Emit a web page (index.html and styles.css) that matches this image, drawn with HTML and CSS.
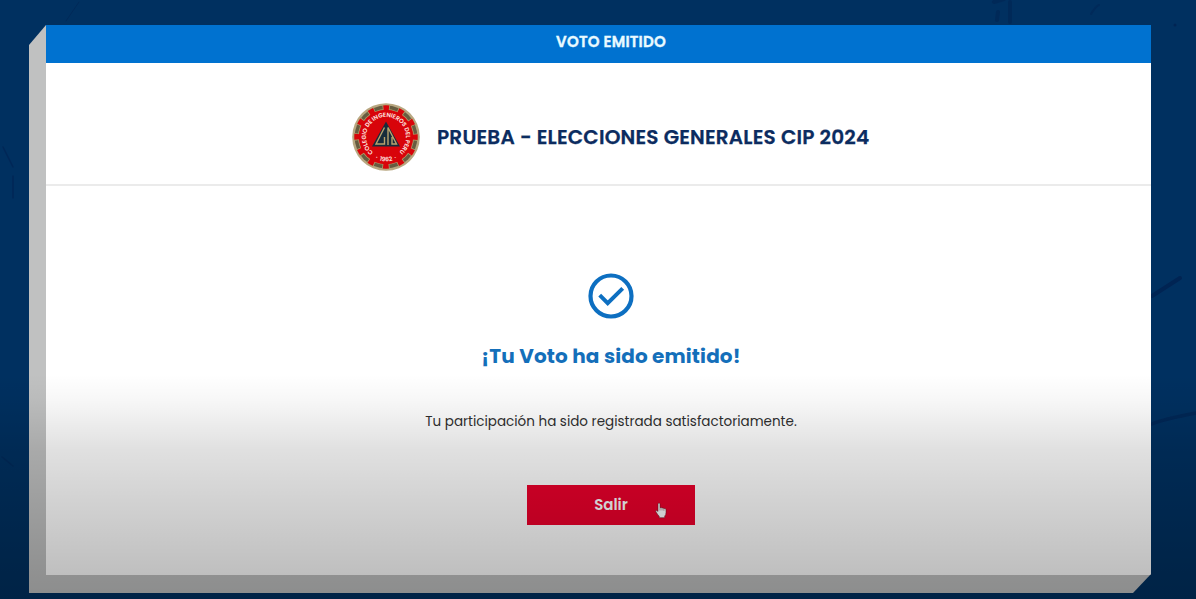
FILE: index.html
```html
<!DOCTYPE html>
<html lang="es">
<head>
<meta charset="utf-8">
<title>Voto emitido</title>
<link rel="stylesheet" href="styles.css">
</head>
<body>
<svg class="backdrop" viewBox="0 0 1196 599" aria-hidden="true">
  <g fill="none" stroke="#002453" stroke-linecap="round">
    <path d="M3 147l10 20M13 176v22" stroke-width="1.5" opacity=".7"/>
    <path d="M79 2L66 21" stroke-width="1" opacity=".6"/>
    <path d="M994 2l10-3M998 12l-1 8M1010 2v20" stroke-width="4" opacity=".6"/>
    <path d="M1091 14q5-8 8-9" stroke-width="2" opacity=".5"/>
    <path d="M1152 296L1180 278" stroke-width="4"/>
    <path d="M1152 424q12-5 44-11" stroke-width="3.5" opacity=".75"/>
    <path d="M2 457l11 9" stroke-width="1.5" opacity=".5"/>
  </g>
  <circle cx="1175" cy="25" r="1.5" fill="#002453"/>
</svg>
<main class="slab">
  <section class="card">
    <header class="banner"><span class="banner-text">VOTO EMITIDO</span></header>
    <div class="brand">
      <svg class="seal" viewBox="0 0 68 68" aria-label="Colegio de Ingenieros del Perú">
        <circle cx="34" cy="34" r="33.8" fill="#b8a781"/>
        <circle cx="34" cy="34" r="31.4" fill="#665c40"/>
        <circle cx="34" cy="34" r="28" fill="#b39b68"/>
        <circle cx="34" cy="34" r="29.3" fill="none" stroke="#b39b68" stroke-width="5.4" stroke-dasharray="7.2 8.142" stroke-dashoffset="3.6"/>
        <circle cx="34" cy="34" r="27.2" fill="#d8040a"/>
        <circle cx="34" cy="34" r="29" fill="none" stroke="#d8040a" stroke-width="5.4" stroke-dasharray="5.6 9.584" stroke-dashoffset="2.8"/>
        <path id="ring" d="M21.3 49.3A20 20 0 1 1 46.7 49.3" fill="none"/>
        <path id="ring-low" d="M14 48A24.6 24.6 0 0 0 54 48" fill="none"/>
        <text class="seal-text"><textPath href="#ring" textLength="97">COLEGIO DE INGENIEROS DEL PERU</textPath></text>
        <text class="seal-text"><textPath href="#ring-low" startOffset="50%" text-anchor="middle">· &#160;1962&#160; ·</textPath></text>
        <path d="M34 18.5L48 43.5H20Z" fill="#172c3b"/>
        <path d="M32.5 24.5L24 41H32.5V34M36 42V24.5L44.5 41H40V34" fill="none" stroke="#b9a36e" stroke-width="1.4"/>
      </svg>
      <h1 class="title">PRUEBA - ELECCIONES GENERALES CIP 2024</h1>
    </div>
    <div class="result">
      <svg class="check" viewBox="0 0 46 46" fill="none" stroke="#0d6fc1" aria-hidden="true">
        <circle cx="23" cy="23" r="20.5" stroke-width="4.2"/>
        <path d="M11.7 22.2L19.7 30.2L34.7 15.4" stroke-width="4"/>
      </svg>
      <h2 class="headline">¡Tu Voto ha sido emitido!</h2>
      <p class="message">Tu participación ha sido registrada satisfactoriamente.</p>
      <button class="exit" type="button"><span class="exit-text">Salir</span>
        <svg class="pointer" viewBox="0 0 12 16" aria-hidden="true">
          <path d="M3 1.7Q3.1.5 4.1.6Q5 .7 5 1.7V5.4Q6.1 4.6 7 5.6Q8.1 5 8.8 6Q10.6 5.5 11 7.2V10Q11 12.5 9.7 13.6V15.2H4.2V13.7Q3 12.7 1 9.5Q.3 8.3 1.3 8Q2 7.8 3 9Z" fill="#fff" stroke="#591420" stroke-width=".5"/>
          <path d="M5 5.6V8M7 5.8V8M8.9 6.2V8.3" stroke="#704049" stroke-width=".5"/>
        </svg>
      </button>
    </div>
  </section>
</main>
<div class="shade"></div>
</body>
</html>
```
FILE: styles.css
```css
* { box-sizing: border-box; }
body {
  margin: 0;
  width: 1196px;
  height: 599px;
  padding: 25px 45px 0 29px;
  overflow: hidden;
  background: #003060;
  font-family: Poppins, Inter, "Open Sans", sans-serif;
}
.backdrop { position: absolute; inset: 0; width: 1196px; height: 599px; }
.slab {
  position: relative;
  height: 568px;
  padding: 0 0 18.5px 17px;
  background: #c0c1c1;
  clip-path: polygon(17px 0, 100% 0, 100% 549px, 1104px 100%, 0 100%, 0 20px);
}
.card {
  display: flex;
  flex-direction: column;
  height: 100%;
  background: #fff;
}
.banner {
  display: flex;
  justify-content: center;
  height: 38px;
  padding: 7px 0 0 25px;
  background: #0072d0;
  color: #e9faff;
  line-height: 20px;
  white-space: nowrap;
}
.banner-text { font-size: 15px; font-weight: 600; letter-spacing: .2px; -webkit-text-stroke: .35px #e9faff; }
.brand {
  display: flex;
  justify-content: center;
  align-items: flex-start;
  gap: 17px;
  height: 123px;
  padding: 40px 0 0 24px;
  border-bottom: 2px solid #ebebeb;
  white-space: nowrap;
}
.seal { width: 68px; height: 68px; }
.seal-text { fill: #ffe9e2; font-size: 6px; font-weight: 600; }
.title {
  margin: 0;
  padding-top: 20px;
  width: 432px;
  color: #0c2c60;
  font-size: 20px;
  line-height: 28px;
  font-weight: 600;
  letter-spacing: .2px;
  -webkit-text-stroke: .25px #0c2c60;
}
.result {
  display: flex;
  flex-direction: column;
  align-items: center;
  padding: 87px 0 0 25px;
  white-space: nowrap;
}
.check { width: 46px; height: 46px; }
.headline { margin: 22px 0 0; color: #146fba; font-size: 20px; line-height: 30px; font-weight: 700; letter-spacing: .12px; }
.message { margin: 40px 0 0; color: #303030; font-size: 13.5px; line-height: 22px; }
.exit {
  position: relative;
  width: 168px;
  height: 40px;
  margin-top: 52px;
  padding: 0;
  border: 0;
  background: #ec002b;
  color: #fff;
  font: inherit;
  font-size: 15px;
  font-weight: 600;
  line-height: 40px;
}
.pointer { position: absolute; left: 128px; top: 17px; width: 12px; height: 17px; }
.shade {
  position: absolute;
  inset: 374px 0 0;
  background: linear-gradient(rgba(0,0,0,0), rgba(0,0,0,.033) 26px, rgba(0,0,0,.12) 76px, rgba(0,0,0,.175) 126px, rgba(0,0,0,.25) 200px, rgba(0,0,0,.27));
  pointer-events: none;
}
```
